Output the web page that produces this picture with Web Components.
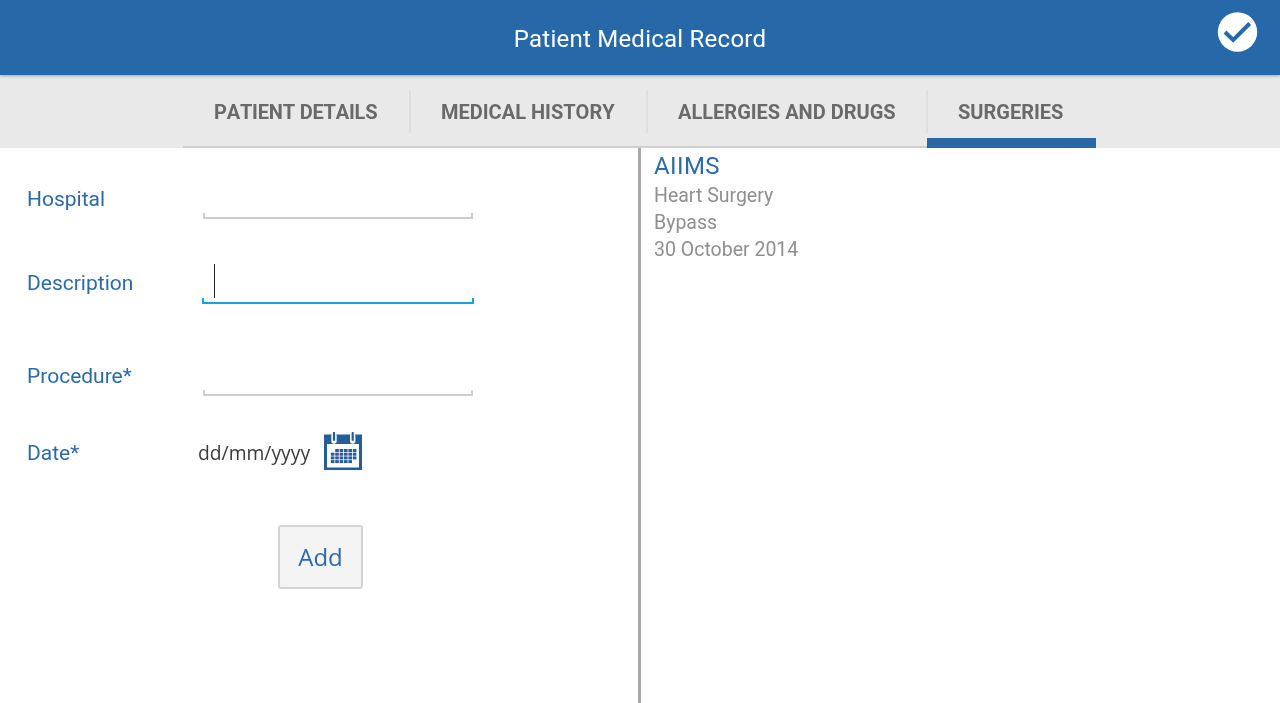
<!DOCTYPE html>
<html>
<head>
<meta charset="utf-8">
<title>Patient Medical Record</title>
<style>
  html, body { margin:0; height:100%; }
  body { font-family:Roboto, sans-serif; background:#fff; overflow:hidden; }
</style>
</head>
<body>
<record-app>
  <app-header slot="header" title="Patient Medical Record"></app-header>
  <tab-bar slot="tabs">
    <tab-item style="width:227px;letter-spacing:-.2px">PATIENT DETAILS</tab-item>
    <tab-item style="width:237px">MEDICAL HISTORY</tab-item>
    <tab-item style="width:280px">ALLERGIES AND DRUGS</tab-item>
    <tab-item style="width:169px" active>SURGERIES</tab-item>
  </tab-bar>
  <surgery-form slot="left"></surgery-form>
  <surgery-card slot="right" hospital="AIIMS" description="Heart Surgery" procedure="Bypass" date="30 October 2014"></surgery-card>
</record-app>

<script>
class RecordApp extends HTMLElement {
  constructor(){
    super();
    this.attachShadow({ mode:'open' }).innerHTML = `
      <style>
        :host{ display:flex; flex-direction:column; height:703px; will-change:transform; }
        .body{ flex:1; display:flex; min-height:0; }
        .left{ width:638px; border-right:3px solid #a9a9a9; flex:none; }
        .right{ flex:1; }
      </style>
      <slot name="header"></slot>
      <slot name="tabs"></slot>
      <div class="body">
        <div class="left"><slot name="left"></slot></div>
        <div class="right"><slot name="right"></slot></div>
      </div>`;
  }
}

class AppHeader extends HTMLElement {
  constructor(){
    super();
    this.attachShadow({ mode:'open' }).innerHTML = `
      <style>
        :host{ display:block; position:relative; z-index:2; }
        .bar{ height:75px; background:#2668a8; box-shadow:0 1px 3px rgba(0,0,0,.3); display:flex; align-items:center; justify-content:center; color:#fff; font:400 24px/1 Roboto, sans-serif; letter-spacing:.24px; padding-top:2px; box-sizing:border-box; }
        svg{ position:absolute; left:1217px; top:12px; }
      </style>
      <div class="bar"><span class="t"></span></div>
      <svg width="41" height="41" viewBox="0 0 41 41">
        <circle cx="20.5" cy="20" r="19.7" fill="#fff"/>
        <path d="M8 20 L16.2 28 L32.7 11.5" fill="none" stroke="#2668a8" stroke-width="4"/>
      </svg>`;
    this.shadowRoot.querySelector('.t').textContent = this.getAttribute('title');
  }
}

class TabBar extends HTMLElement {
  constructor(){
    super();
    this.attachShadow({ mode:'open' }).innerHTML = `
      <style>
        :host{ display:block; background:#e9e9e9; height:73px; padding-left:183px; box-sizing:border-box; }
        .row{ display:flex; width:913px; height:73px; box-shadow:inset 0 -2px 0 #cfcfcf; }
      </style>
      <div class="row"><slot></slot></div>`;
  }
}

class TabItem extends HTMLElement {
  constructor(){
    super();
    this.attachShadow({ mode:'open' }).innerHTML = `
      <style>
        :host{ display:block; position:relative; box-sizing:border-box; height:73px; padding-left:31px; font:700 20px/75px Roboto, sans-serif; font-kerning:none; color:#6a6a6a; white-space:nowrap; }
        :host(:not(:last-child))::after{ content:""; position:absolute; right:-1px; top:15px; height:43px; width:2px; background:#dedede; }
        :host([active])::before{ content:""; position:absolute; left:0; right:0; bottom:0; height:10px; background:#2668a8; }
      </style>
      <slot></slot>`;
  }
}

class FormField extends HTMLElement {
  constructor(){
    super();
    this.attachShadow({ mode:'open' }).innerHTML = `
      <style>
        :host{ display:block; position:relative; width:270px; height:30px; margin-top:4px; box-sizing:border-box; border:solid #cdcdcd; border-width:0 2px 2px; border-image:linear-gradient(to bottom, transparent 0 24px, #cdcdcd 24px) 2; }
        :host([focused]){ width:272px; margin-left:-1px; margin-top:5px; border-image:linear-gradient(to bottom, transparent 0 24px, #14a5d8 24px) 2; }
        .caret{ display:none; position:absolute; left:10px; top:-10px; width:1px; height:34px; background:#222; }
        :host([focused]) .caret{ display:block; }
      </style>
      <span class="caret"></span>`;
  }
}

class FormRow extends HTMLElement {
  constructor(){
    super();
    this.attachShadow({ mode:'open' }).innerHTML = `
      <style>
        :host{ display:grid; grid-template-columns:176px 1fr; align-items:start; box-sizing:border-box; padding-left:27px; }
        .label{ font:400 21px/28px Roboto, sans-serif; color:#2d6aa8; }
      </style>
      <span class="label"></span><div><slot></slot></div>`;
    this.shadowRoot.querySelector('.label').textContent = this.getAttribute('label');
  }
}

class DateField extends HTMLElement {
  constructor(){
    super();
    this.attachShadow({ mode:'open' }).innerHTML = `
      <style>
        :host{ display:flex; align-items:center; height:38px; margin:-7px 0 0 -5px; font:400 19.3px/38px "Open Sans", sans-serif; color:#3a3a3a; }
        span{ width:112px; padding-top:3px; white-space:nowrap; }
        svg{ margin-left:14px; flex:none; }
      </style>
      <span>dd/mm/yyyy</span>
      <svg width="38" height="38" viewBox="0 0 38 38">
        <rect x="0" y="2.5" width="38" height="35.5" fill="#275d97"/>
        <rect x="3" y="12" width="32" height="23.5" fill="#fff"/>
        <path d="M10 4v5M28.7 4v5" stroke="#fff" stroke-width="5.4" stroke-linecap="round"/>
        <path d="M10 1v7M28.7 1v7" stroke="#275d97" stroke-width="2.2" stroke-linecap="round"/>
        <g fill="#275d97" id="g"></g>
      </svg>`;
    const ns = 'http://www.w3.org/2000/svg', g = this.shadowRoot.querySelector('#g');
    const rows = [[1,5],[0,5],[0,5],[0,4]];
    rows.forEach((rw, y) => {
      for (let x = rw[0]; x <= rw[1]; x++) {
        const r = document.createElementNS(ns, 'rect');
        r.setAttribute('x', 6.8 + x * 4.4); r.setAttribute('y', 17 + y * 3.7);
        r.setAttribute('width', 3.6); r.setAttribute('height', 3);
        g.appendChild(r);
      }
    });
  }
}

class SurgeryForm extends HTMLElement {
  constructor(){
    super();
    this.attachShadow({ mode:'open' }).innerHTML = `
      <style>
        :host{ display:block; padding-top:37px; }
        .r1{ height:84px; } .r2{ height:93px; } .r3{ height:77px; } .r4{ height:86px; }
        button{ display:block; margin-left:278px; width:85px; height:64px; box-sizing:border-box; background:#f4f4f4; border:2px solid #d4d4d4; border-radius:3px; color:#2d6aa8; font:400 24px/1 "Open Sans", sans-serif; padding:0; }
      </style>
      <form-row class="r1" label="Hospital"><form-field></form-field></form-row>
      <form-row class="r2" label="Description"><form-field focused></form-field></form-row>
      <form-row class="r3" label="Procedure*"><form-field></form-field></form-row>
      <form-row class="r4" label="Date*"><date-field></date-field></form-row>
      <button type="button">Add</button>`;
  }
}

class SurgeryCard extends HTMLElement {
  constructor(){
    super();
    this.attachShadow({ mode:'open' }).innerHTML = `
      <style>
        :host{ display:block; padding:4px 0 0 13px; font-family:Roboto, sans-serif; }
        h3{ margin:0 0 2px; font:400 24px/28px Roboto, sans-serif; letter-spacing:.4px; color:#2d6aa8; }
        p{ margin:0; font:400 19.5px/27px Roboto, sans-serif; color:#8f8f8f; }
      </style>
      <h3></h3><p class="d"></p><p class="pr"></p><p class="dt"></p>`;
    const s = this.shadowRoot;
    s.querySelector('h3').textContent = this.getAttribute('hospital');
    s.querySelector('.d').textContent = this.getAttribute('description');
    s.querySelector('.pr').textContent = this.getAttribute('procedure');
    s.querySelector('.dt').textContent = this.getAttribute('date');
  }
}

customElements.define('form-field', FormField);
customElements.define('form-row', FormRow);
customElements.define('date-field', DateField);
customElements.define('surgery-form', SurgeryForm);
customElements.define('surgery-card', SurgeryCard);
customElements.define('tab-item', TabItem);
customElements.define('tab-bar', TabBar);
customElements.define('app-header', AppHeader);
customElements.define('record-app', RecordApp);
</script>
</body>
</html>
